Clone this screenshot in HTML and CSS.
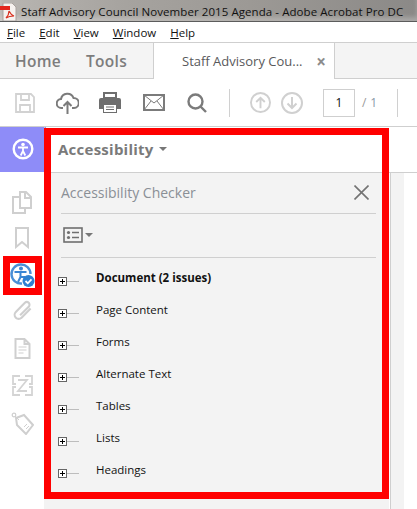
FILE: index.html
```html
<!DOCTYPE html>
<html lang="en">
<head>
<meta charset="utf-8">
<title>Acrobat Accessibility Checker</title>
<link rel="stylesheet" href="styles.css">
</head>
<body>
<div class="app">
  <header class="titlebar">
    <svg class="pdf-icon" width="17" height="18" viewBox="0 0 17 18"><path d="M3 0h9l4 4v14H3z" fill="#f6f2ef" stroke="#a9a29e"/><rect x="0" y="3" width="10" height="4" fill="#e3261c"/><path d="M6 15c2-2 3-4 3-7 1 2 2 4 5 5-3 0-5 0-8 2z" fill="none" stroke="#d8301f" stroke-width="1.200"/></svg>
    <span class="title-text">Staff Advisory Council November 2015 Agenda - Adobe Acrobat Pro DC</span>
  </header>
  <nav class="menubar">
    <span class="menu-item"><u>F</u>ile</span>
    <span class="menu-item"><u>E</u>dit</span>
    <span class="menu-item"><u>V</u>iew</span>
    <span class="menu-item"><u>W</u>indow</span>
    <span class="menu-item"><u>H</u>elp</span>
  </nav>
  <div class="tabs">
    <div class="tabs-left"><span>Home</span><span>Tools</span></div>
    <div class="tab-doc"><span class="tab-name">Staff Advisory Cou...</span><span class="tab-close">×</span></div>
    <div class="tabs-right"></div>
  </div>
  <div class="toolbar">
    <svg class="tool t-save" width="20" height="20" viewBox="0 0 20 20" fill="none" stroke="#d2d2d2" stroke-width="1.800"><path d="M1 1h15l3 3v15H1z"/><path d="M6 1v6h8V1M5 19v-7h10v7"/></svg>
    <svg class="tool t-cloud" width="23" height="22" viewBox="0 0 23 22" fill="none" stroke="#7b7b7b" stroke-width="2"><path d="M7 16H5.500a4.500 4.500 0 0 1-.5-9 6.500 6.500 0 0 1 12.500-1 5 5 0 0 1 .5 10H16"/><path d="M11.500 22V10M7.500 14l4-4 4 4"/></svg>
    <svg class="tool t-print" width="22" height="22" viewBox="0 0 22 22"><path d="M5 1h12v5H5z" fill="none" stroke="#6e6e6e" stroke-width="2"/><path d="M2 6h18a2 2 0 0 1 2 2v9h-4v4H4v-4H0V8a2 2 0 0 1 2-2z" fill="#6e6e6e"/><path d="M5 13h12v7H5z" fill="#fff"/><path d="M7 15h8M7 17.500h8" stroke="#6e6e6e"/></svg>
    <svg class="tool t-mail" width="22" height="17" viewBox="0 0 22 17" fill="none" stroke="#7b7b7b" stroke-width="2"><rect x="1" y="1" width="20" height="15"/><path d="M1 1l10 8 10-8M1 16l7-9M21 16l-7-9" stroke-width="1"/></svg>
    <svg class="tool t-search" width="20" height="20" viewBox="0 0 20 20" fill="none" stroke="#7b7b7b" stroke-width="2.400"><circle cx="8.500" cy="8.500" r="7"/><path d="M13.500 13.500l5.500 5.500"/></svg>
    <span class="sep s-first"></span>
    <svg class="tool t-up" width="21" height="21" viewBox="0 0 22 22" fill="none" stroke="#d0d0d0" stroke-width="2"><circle cx="11" cy="11" r="10"/><path d="M11 17V6M6.500 10.500L11 6l4.500 4.500"/></svg>
    <svg class="tool t-down" width="22" height="22" viewBox="0 0 22 22" fill="none" stroke="#d0d0d0" stroke-width="2"><circle cx="11" cy="11" r="10"/><path d="M11 5v11M6.500 11.500L11 16l4.500-4.500"/></svg>
    <span class="page-box">1</span>
    <span class="page-total"><i>/</i><b>1</b></span>
    <span class="sep s-last"></span>
  </div>
  <main class="main">
    <aside class="sidebar">
      <div class="side-top">
        <svg width="22" height="22" viewBox="0 0 22 22" fill="none" stroke="#fff"><circle cx="11" cy="11" r="9.300" stroke-width="2.400"/><circle cx="11" cy="6.500" r="1.800" fill="#fff" stroke="none"/><path d="M6 9.500h10M11 9.500v4M11 13l-2.300 4.500M11 13l2.300 4.500" stroke-width="1.800"/></svg>
      </div>
      <div class="side-icons">
        <svg class="si si-pages" width="20" height="23" viewBox="0 0 20 23" fill="none" stroke="#cfcfcf" stroke-width="2"><path d="M8 1h6l5 5v11H8zM13 1v6h6"/><path d="M8 6H1v16h12v-5"/></svg>
        <svg class="si si-mark" width="14" height="22" viewBox="0 0 14 22" fill="none" stroke="#cfcfcf" stroke-width="2"><path d="M1 1h12v19l-6-5-6 5z"/></svg>
        <div class="si-active">
          <svg width="25" height="27" viewBox="0 0 25 27"><path d="M12 21.500A9.500 9.500 0 1 1 20.500 12" fill="none" stroke="#4a8fd6" stroke-width="2.400"/><circle cx="11" cy="6.500" r="2" fill="#3a86d4"/><path d="M4.500 10h12M10.500 10v5l-2.500 5M11 15h4" fill="none" stroke="#3a86d4" stroke-width="2"/><circle cx="18.500" cy="19" r="6" fill="#2f80d0"/><path d="M15.500 19l2.300 2.300 3.700-4" fill="none" stroke="#fff" stroke-width="1.800"/></svg>
        </div>
        <svg class="si si-clip" width="21" height="21" viewBox="0 0 21 22" fill="none" stroke="#cfcfcf" stroke-width="2.200"><path d="M19 9L9.500 18.500a4 4 0 0 1-6-6L13 3a2.700 2.700 0 0 1 4 4L8 16"/></svg>
        <svg class="si si-doc" width="17" height="21" viewBox="0 0 16 21" fill="none" stroke="#cfcfcf" stroke-width="2"><path d="M1 1h9l5 5v14H1zM10 1v5h5"/><path d="M4 9h8M4 12h8M4 15h5" stroke-width="1"/></svg>
        <svg class="si si-compare" width="21" height="21" viewBox="0 0 21 21" fill="none" stroke="#d4d4d4" stroke-width="1.800"><path d="M8 1H1v8h3M13 1h7v8h-3M8 20H1v-8h3M13 20h7v-8h-3M6 5h9L6 16h9"/></svg>
        <svg class="si si-tag" width="23" height="23" viewBox="0 0 23 23" fill="none" stroke="#cfcfcf" stroke-width="2"><path d="M5 6l8-3 9 10-7 9L6 13z"/><circle cx="3" cy="3" r="1.800" stroke-width="1.200"/><path d="M4 4l4 4M13 15l3-3M15 17l3-3" stroke-width="1"/></svg>
      </div>
    </aside>
    <div class="work">
      <section class="content">
        <div class="panel">
          <div class="panel-head"><span class="panel-title">Accessibility</span><span class="caret"></span></div>
          <div class="checker">
            <div class="checker-head">
              <span>Accessibility Checker</span>
              <svg width="15" height="15" viewBox="0 0 15 15" stroke="#737373" stroke-width="1.600"><path d="M.5.500l14 14M14.500.500l-14 14"/></svg>
            </div>
            <div class="checker-tools">
              <svg width="20" height="16" viewBox="0 0 20 16" fill="none" stroke="#6f6f6f"><rect x="1" y="1" width="18" height="14" stroke-width="1.600"/><circle cx="5.500" cy="5.500" r="1.600" fill="#6f6f6f" stroke="none"/><circle cx="5.500" cy="10.500" r="1.600" fill="#6f6f6f" stroke="none"/><path d="M9 5.500h7M9 10.500h7" stroke-width="1.600"/></svg>
              <span class="caret small"></span>
            </div>
            <ul class="tree">
              <li class="bold"><span class="plus"></span><span class="dash"></span><span class="label">Document (2 issues)</span></li>
              <li><span class="plus"></span><span class="dash"></span><span class="label">Page Content</span></li>
              <li><span class="plus"></span><span class="dash"></span><span class="label">Forms</span></li>
              <li><span class="plus"></span><span class="dash"></span><span class="label">Alternate Text</span></li>
              <li><span class="plus"></span><span class="dash"></span><span class="label">Tables</span></li>
              <li><span class="plus"></span><span class="dash"></span><span class="label">Lists</span></li>
              <li><span class="plus"></span><span class="dash"></span><span class="label">Headings</span></li>
            </ul>
          </div>
        </div>
      </section>
      <div class="strip">
        <div class="strip-head"></div>
        <div class="strip-body"></div>
      </div>
    </div>
  </main>
</div>
</body>
</html>
```
FILE: styles.css
```css
* { box-sizing: border-box; }
html, body { margin: 0; padding: 0; background: #fff; }
body { width: 417px; height: 509px; overflow: hidden; font-family: "Open Sans", "Noto Sans", sans-serif; color: #000; }
.app { display: flex; flex-direction: column; height: 509px; }
.titlebar { height: 22px; display: flex; align-items: center; gap: 4px; background: linear-gradient(90deg, #b9b6b2 0%, #a6a39f 30%, #9c9995 60%, #8b8987 100%); border-bottom: 1px solid #5c5c5c; box-shadow: inset 0 -4px 4px rgba(255,255,255,.25); }
.pdf-icon { margin-top: 2px; flex: none; }
.title-text { font-size: 11.500px; letter-spacing: .07px; color: #111; white-space: nowrap; margin-top: 1px; }
.menubar { height: 20px; display: flex; padding-left: 7px; gap: 14px; align-items: center; font-size: 11.500px; background: #fff; color: #111; }
.tabs { height: 37px; display: flex; background: #fff; border-top: 1px solid #cfcfcf; }
.tabs-left { width: 154px; display: flex; gap: 25px; align-items: center; padding-left: 15px; background: #f4f4f4; border-right: 1px solid #cfcfcf; border-bottom: 1px solid #cfcfcf; font-size: 15.500px; letter-spacing: .3px; font-weight: 600; color: #7d7d7d; }
.tab-doc { width: 180px; display: flex; align-items: center; padding-left: 28px; font-size: 13px; color: #58595b; justify-content: space-between; padding-right: 8px; background: #fff; }
.tab-name { white-space: nowrap; }
.tab-close { font-size: 17px; font-weight: 700; color: #8c8c8c; line-height: 1; }
.tabs-right { flex: 1; background: #f4f4f4; border-left: 1px solid #cfcfcf; border-bottom: 1px solid #cfcfcf; }
.toolbar { height: 48px; display: flex; align-items: center; background: #fff; border-bottom: 1px solid #cfcfcf; padding-left: 15px; }
.tool { flex: none; }
.t-cloud { margin-left: 21px; }
.t-print { margin-left: 20px; }
.t-mail { margin-left: 22px; }
.t-search { margin-left: 22px; }
.sep { width: 1px; height: 28px; background: #d0d0d0; flex: none; }
.s-first { margin-left: 22px; }
.t-up { margin-left: 20px; }
.t-down { margin-left: 10px; }
.page-box { width: 32px; height: 28px; margin-left: 20px; border: 1px solid #cfcfcf; display: flex; align-items: center; justify-content: center; font-size: 12px; color: #111; flex: none; }
.page-total { margin-left: 7px; width: 15px; display: flex; justify-content: space-between; font-size: 12px; flex: none; }
.page-total i { font-style: normal; color: #999; }
.page-total b { font-weight: 400; color: #8a9aa8; }
.s-last { margin-left: 20px; }
.main { flex: 1; display: flex; min-height: 0; }
.sidebar { width: 44px; flex: none; background: #fff; display: flex; flex-direction: column; }
.side-top { height: 45px; width: 46px; background: #8e8cf8; display: flex; align-items: center; justify-content: center; flex: none; padding-bottom: 1px; }
.side-icons { display: flex; flex-direction: column; align-items: center; padding-top: 19px; }
.si { display: block; flex: none; }
.si-mark { margin-top: 13px; }
.si-active { margin-top: 7px; width: 39px; height: 39px; border: 7px solid #f00; background: #fff; display: flex; align-items: center; justify-content: center; margin-left: 1px; flex: none; }
.si-clip { margin-top: 5px; }
.si-doc { margin-top: 17px; }
.si-compare { margin-top: 16px; }
.si-tag { margin-top: 16px; }
.work { flex: 1; display: flex; min-width: 0; border-left: 1px solid #cfcfcf; }
.content { width: 345px; margin-left: -1px; margin-top: 1px; background: #f3f3f3; flex: none; }
.panel { width: 345px; height: 371px; border: 7px solid #f00; background: #f4f4f4; display: flex; flex-direction: column; }
.panel-head { height: 38px; background: #fff; border-bottom: 1px solid #cfcfcf; display: flex; align-items: center; padding: 0 0 10px 7px; gap: 5px; flex: none; }
.panel-title { font-size: 15px; font-weight: 700; color: #7a7a7a; letter-spacing: .25px; }
.caret { width: 0; height: 0; border-left: 4px solid transparent; border-right: 4px solid transparent; border-top: 4px solid #777; margin-top: 1px; }
.caret.small { margin-left: 2px; margin-top: 0; }
.checker { flex: 1; padding: 0 6px 0 10px; display: flex; flex-direction: column; background: #f3f3f3; }
.checker-head { height: 41px; display: flex; align-items: center; justify-content: space-between; font-size: 14px; color: #8a8f96; border-bottom: 1px solid #cfcfcf; padding: 0 7px 2px 0; flex: none; }
.checker-tools { height: 44px; display: flex; align-items: center; padding: 0 0 2px 2px; border-bottom: 1px solid #cfcfcf; flex: none; }
.tree { list-style: none; margin: 0 0 0 -3px; padding: 5px 0 0 0; }
.tree li { height: 32px; display: flex; align-items: center; font-size: 11.500px; color: #111; }
.tree li.bold { font-weight: 700; }
.plus { width: 9px; height: 9px; border: 1px solid #666; flex: none; margin-top: 4px; background: linear-gradient(#000,#000) center/5px 1px no-repeat, linear-gradient(#000,#000) center/1px 5px no-repeat, #fff; }
.dash { width: 12px; height: 1px; background: #bdbdbd; margin-top: 4px; flex: none; }
.label { margin-left: 17px; margin-top: -3px; white-space: nowrap; }
.strip { flex: 1; display: flex; flex-direction: column; min-width: 0; }
.strip-head { height: 46px; background: #fff; border-bottom: 1px solid #cfcfcf; flex: none; }
.strip-body { flex: 1; margin-left: 1px; width: 14px; background: #f3f3f3; border-left: 1px solid #cfcfcf; }
```
